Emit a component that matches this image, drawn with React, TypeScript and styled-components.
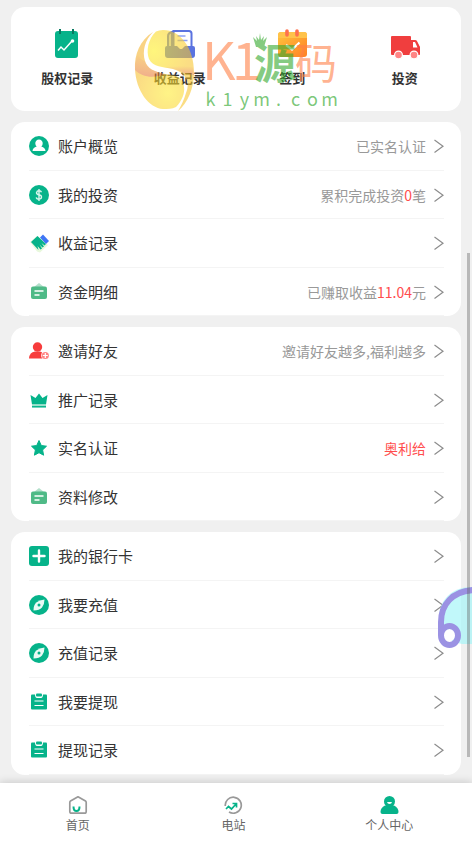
import React from 'react';
import styled, { createGlobalStyle } from 'styled-components';

const GREEN = '#06b38a';

const GlobalStyle = createGlobalStyle`
  * { box-sizing: border-box; }
  body {
    margin: 0;
    background: #f0f0f0;
    font-family: 'Noto Sans CJK SC', 'Noto Sans', sans-serif;
    color: #333;
  }
  a { color: inherit; text-decoration: none; }
`;

const Page = styled.div`
  position: relative;
  display: flex;
  flex-direction: column;
  min-height: 100vh;
`;

const Content = styled.main`
  display: flex;
  flex-direction: column;
  gap: 11px;
  padding: 7px 11px 8px;
`;

const Shortcuts = styled.nav`
  display: grid;
  grid-template-columns: repeat(4, 1fr);
  padding: 21px 0 24px;
  border-radius: 14px;
  background: #fff;
`;

const Shortcut = styled.a`
  display: flex;
  flex-direction: column;
  align-items: center;
  gap: 9px;
  font-size: 13px;
  font-weight: 700;
  line-height: 18px;
`;

const ShortcutIcon = styled.svg`
  width: 32px;
  height: 32px;
`;

const Group = styled.nav`
  padding: 0 17px 0 18px;
  border-radius: 14px;
  background: #fff;
`;

const Row = styled.a`
  display: flex;
  align-items: center;
  height: 49px;
  border-bottom: 1px solid #f4f4f4;

  &:nth-child(even) {
    height: 48px;
  }
`;

const RowIcon = styled.svg`
  flex: none;
  width: 20px;
  height: 20px;
  margin-right: 9px;
`;

const RowLabel = styled.span`
  flex: 1;
  font-size: 15px;
  line-height: 20px;
`;

const RowValue = styled.span<{ $alert?: boolean }>`
  margin-right: 8px;
  font-size: 14px;
  line-height: 20px;
  color: ${(p) => (p.$alert ? '#ff4d4d' : '#999')};
`;

const Amount = styled.span`
  color: #ff4d4d;
`;

const Chevron = styled.svg`
  flex: none;
  width: 10px;
  height: 16px;
`;

const TabBar = styled.nav`
  position: sticky;
  bottom: 0;
  display: grid;
  grid-template-columns: repeat(3, 1fr);
  margin-top: auto;
  padding: 12px 5px 11px 0;
  background: #fff;
  box-shadow: 0 -1px 8px rgba(0, 0, 0, 0.16);
`;

const Tab = styled.a`
  display: flex;
  flex-direction: column;
  align-items: center;
  gap: 2px;
  font-size: 12px;
  line-height: 16px;
  color: #666;
`;

const TabIcon = styled.svg`
  width: 20px;
  height: 20px;
`;

const Watermark = styled.div`
  position: absolute;
  top: 29px;
  left: 50%;
  transform: translateX(-50%);
  display: flex;
  gap: 8px;
  pointer-events: none;
`;

const Egg = styled.svg`
  width: 60px;
  height: 83px;
`;

const Brand = styled.div`
  display: flex;
  flex-direction: column;
  gap: 2px;
`;

const BrandName = styled.div`
  position: relative;
  display: grid;
  grid-template-columns: 30px 22px 41px 41px;
  height: 56px;
  padding-top: 8px;
  align-items: start;
`;

const BrandLetter = styled.span<{ $green?: boolean; $large?: boolean }>`
  font-size: ${(p) => (p.$large ? '52px' : '42px')};
  line-height: ${(p) => (p.$large ? '42px' : '48px')};
  font-weight: ${(p) => (p.$green ? 700 : 400)};
  color: ${(p) => (p.$green ? 'rgba(50, 168, 45, 0.6)' : 'rgba(255, 128, 70, 0.6)')};
`;

const BrandCrown = styled.svg`
  position: absolute;
  top: 3px;
  left: 50px;
  width: 16px;
  height: 16px;
`;

const BrandSite = styled.div`
  display: grid;
  grid-template-columns: repeat(8, 17px);
  justify-items: center;
  font-size: 18px;
  line-height: 22px;
  color: rgba(50, 168, 45, 0.65);
`;

const SupportButton = styled.button`
  position: fixed;
  right: 0;
  top: 586px;
  width: 34px;
  height: 64px;
  padding: 0;
  border: 0;
  background: none;
  overflow: hidden;
`;

const ScrollThumb = styled.div`
  position: absolute;
  top: 253px;
  right: 2px;
  width: 3px;
  height: 504px;
  background: rgba(100, 100, 100, 0.4);
`;

const shortcuts = [
  {
    label: '股权记录',
    icon: (
      <>
        <rect x="4" y="3" width="23" height="27" rx="3" fill={GREEN} />
        <path d="M9 1v5M22 1v5" stroke="#087a61" strokeWidth="2" />
        <path d="M7 22.500l3-3.500 3 3 8-9" fill="none" stroke="#fff" strokeWidth="1.500" />
        <circle cx="21.500" cy="13" r="1.800" fill="#fff" />
      </>
    ),
  },
  {
    label: '收益记录',
    icon: (
      <>
        <path d="M4 19V8q0-3 4-4v15" fill="#c6cff7" stroke="#5a73e0" strokeWidth="2" />
        <path d="M9.500 20V3H25q2.500 0 2.500 2.500V20" fill="#fff" stroke="#5a73e0" strokeWidth="2" />
        <path d="M13.500 8h8M13.500 12.500h10" stroke="#8fa4f5" strokeWidth="1.500" />
        <path d="M3 18h10l3 3h2l3-3h8q2 0 2 2v7q0 3-3 3H4q-3 0-3-3v-7q0-2 2-2z" fill="#5a73e0" />
      </>
    ),
  },
  {
    label: '签到',
    icon: (
      <>
        <defs>
          <linearGradient id="checkin" x1="0" y1="0" x2="1" y2="1">
            <stop offset="0" stopColor="#ffc53d" />
            <stop offset="1" stopColor="#ff8125" />
          </linearGradient>
        </defs>
        <rect x="2" y="4" width="29" height="25" rx="3" fill="url(#checkin)" />
        <path d="M2 10V7q0-3 3-3h23q3 0 3 3v3z" fill="#ffc34a" />
        <path d="M11 3v4M21 3v4" stroke="#ff704d" strokeWidth="3.600" strokeLinecap="round" />
        <path d="M10 17l6 4.500 7.500-7" fill="none" stroke="#fff" strokeWidth="2.200" />
      </>
    ),
  },
  {
    label: '投资',
    icon: (
      <>
        <path d="M3 8h18q1 0 1 1v3h4l4.500 7v7q0 1-1 1H3q-1 0-1-1V9q0-1 1-1z" fill="#f03e3e" />
        <path d="M22 12h4q2 0 2.500 2l2.500 5v7q0 1-1 1h-8z" fill="#f03e3e" />
        <path d="M24 14h2l2.500 5.500H24z" fill="#fff" />
        <circle cx="9.500" cy="27" r="3.900" fill="#ff8585" stroke="#fff" strokeWidth="1.200" />
        <circle cx="25" cy="27" r="3.900" fill="#ff8585" stroke="#fff" strokeWidth="1.200" />
      </>
    ),
  },
];

const briefcase = (
  <>
    <path d="M5 5l5-4 5 4z" fill="#b2dfca" />
    <rect x="2" y="4.500" width="16" height="12.500" rx="2" fill="#4fba87" />
    <path d="M5.500 9h9M5.500 13h5" stroke="#fff" strokeWidth="1.500" />
  </>
);

const compass = (
  <>
    <circle cx="10" cy="10" r="10" fill={GREEN} />
    <path d="M15.500 4.500q0 5-2.500 8T4.500 15.500q0-5.500 2.800-8t8.200-3z" fill="#e9faf5" />
    <circle cx="10" cy="10" r="1.500" fill={GREEN} />
  </>
);

const clipboard = (
  <>
    <path d="M3 2.500h14q1 0 1 1v13q0 1-1 1H3q-1 0-1-1v-13q0-1 1-1z" fill={GREEN} />
    <path d="M6 2q0 4 2 4h4q2 0 2-4z" fill="#fff" />
    <path d="M7 2.500q0-1 1-1h4q1 0 1 1v1q0 1-1 1H8q-1 0-1-1z" fill={GREEN} />
    <path d="M5.500 9h9M5.500 13.500h9" stroke="#fff" strokeWidth="1.200" />
  </>
);

interface RowData {
  label: string;
  icon: React.ReactNode;
  value?: React.ReactNode;
  alert?: boolean;
}

const groups: RowData[][] = [
  [
    {
      label: '账户概览',
      value: '已实名认证',
      icon: (
        <>
          <circle cx="10" cy="10" r="10" fill={GREEN} />
          <path d="M10 3.500a3.700 3.700 0 0 1 3.700 4q0 2-1.400 3 4 1.200 4.200 4.500H3.500q.200-3.300 4.200-4.500-1.400-1-1.400-3A3.700 3.700 0 0 1 10 3.500z" fill="#fff" />
        </>
      ),
    },
    {
      label: '我的投资',
      value: (
        <>
          累积完成投资<Amount>0</Amount>笔
        </>
      ),
      icon: (
        <>
          <circle cx="10" cy="10" r="10" fill={GREEN} />
          <path d="M12.500 7.300Q12 5.800 10 5.800T7.500 7.700q0 1.600 2.500 2.100t2.500 2.300q0 2-2.500 2t-2.700-1.800M10 4v12" fill="none" stroke="#d8f5ec" strokeWidth="1.400" />
        </>
      ),
    },
    {
      label: '收益记录',
      icon: (
        <>
          <path d="M1 9l7-6 11 9-8 7.500-3-1z" fill="#e8f8dc" />
          <path d="M2 9l6.500-6L17 11l-1.500 1.500-3-2.500 2.500 3.500-1.500 1-3-3 2.500 4-1.500 1-3-3.500L9.500 17z" fill={GREEN} />
          <path d="M11 4.500L14 1.500 20 8l-3 3z" fill="#3f75f5" />
        </>
      ),
    },
    {
      label: '资金明细',
      value: (
        <>
          已赚取收益<Amount>11.04</Amount>元
        </>
      ),
      icon: briefcase,
    },
  ],
  [
    {
      label: '邀请好友',
      value: '邀请好友越多,福利越多',
      icon: (
        <>
          <circle cx="8.500" cy="6" r="4.700" fill="#f73c3c" />
          <path d="M0 17.500q.500-6.500 6-7h5q3 .500 3 4v3z" fill="#f73c3c" />
          <circle cx="16.300" cy="14.500" r="4.200" fill="#fff" />
          <circle cx="16.300" cy="14.500" r="3.600" fill="#ff8585" />
          <path d="M13.800 14.500h5M16.300 12v5" stroke="#fff" strokeWidth="1.200" />
        </>
      ),
    },
    {
      label: '推广记录',
      icon: (
        <>
          <path d="M1.500 5l5 3L10 3.500 13.500 8l5-3L17 14.500H3z" fill={GREEN} />
          <path d="M3 14.500h14V17H3z" fill="#9de0cc" />
          <path d="M3 16.800h14" stroke={GREEN} strokeWidth="1.500" />
        </>
      ),
    },
    {
      label: '实名认证',
      value: '奥利给',
      alert: true,
      icon: (
        <path
          d="M10 2.500l2.300 5 5.200.700-3.900 3.700 1 5.300L10 14.700l-4.600 2.500 1-5.300-3.900-3.700 5.200-.700z"
          fill={GREEN}
          stroke={GREEN}
          strokeLinejoin="round"
        />
      ),
    },
    { label: '资料修改', icon: briefcase },
  ],
  [
    {
      label: '我的银行卡',
      icon: (
        <>
          <rect width="20" height="20" rx="3" fill={GREEN} />
          <path d="M4.500 10h11M10 4.500v11" stroke="#fff" strokeWidth="2.400" strokeLinecap="round" />
        </>
      ),
    },
    { label: '我要充值', icon: compass },
    { label: '充值记录', icon: compass },
    { label: '我要提现', icon: clipboard },
    { label: '提现记录', icon: clipboard },
  ],
];

const tabs = [
  {
    label: '首页',
    icon: (
      <>
        <path d="M10 1.800L17.500 6q.700.500.700 1.500v9q0 1.700-1.700 1.700h-13q-1.700 0-1.700-1.700v-9Q1.800 6.500 2.500 6z" fill="none" stroke="#999" strokeWidth="1.700" strokeLinejoin="round" />
        <path d="M5.500 11.500q0 4.500 3 4.500t3-4.500" fill="none" stroke={GREEN} strokeWidth="2" />
      </>
    ),
  },
  {
    label: '电站',
    icon: (
      <>
        <path d="M2.300 11A8 8 0 1 1 6 17" fill="none" stroke="#999" strokeWidth="1.700" />
        <path d="M3 14l2.500-2.500 3 2.500L13 9M9.500 8.500h4v4" fill="none" stroke={GREEN} strokeWidth="1.700" />
      </>
    ),
  },
  {
    label: '个人中心',
    icon: (
      <>
        <circle cx="10.500" cy="6.500" r="5.500" fill={GREEN} />
        <path d="M6 10.500h9q4.500 2 4.500 6.500 0 2-2 2h-14q-2 0-2-2 0-4.500 4.500-6.500z" fill={GREEN} />
        <path d="M8 7h5q-.500 2-2.500 2T8 7z" fill="#fff" />
      </>
    ),
  },
];

export default function App() {
  return (
    <Page>
      <GlobalStyle />
      <Content>
        <Shortcuts>
          {shortcuts.map((s) => (
            <Shortcut href="#" key={s.label}>
              <ShortcutIcon viewBox="0 0 32 32" aria-hidden="true">{s.icon}</ShortcutIcon>
              {s.label}
            </Shortcut>
          ))}
        </Shortcuts>
        {groups.map((rows) => (
          <Group key={rows[0].label}>
            {rows.map((row) => (
              <Row href="#" key={row.label}>
                <RowIcon viewBox="0 0 20 20" aria-hidden="true">{row.icon}</RowIcon>
                <RowLabel>{row.label}</RowLabel>
                {row.value && <RowValue $alert={row.alert}>{row.value}</RowValue>}
                <Chevron viewBox="0 0 10 16" aria-hidden="true">
                  <path d="M0.500 2L9 8.200 0.500 14.500" fill="none" stroke="#8c8c8c" strokeWidth="1.200" />
                </Chevron>
              </Row>
            ))}
          </Group>
        ))}
      </Content>

      <TabBar>
        {tabs.map((t) => (
          <Tab href="#" key={t.label}>
            <TabIcon viewBox="0 0 20 20" aria-hidden="true">{t.icon}</TabIcon>
            {t.label}
          </Tab>
        ))}
      </TabBar>

      <Watermark>
        <Egg viewBox="0 0 60 83" aria-hidden="true">
          <defs>
            <radialGradient id="yolk" gradientUnits="userSpaceOnUse" cx="20" cy="22" r="36">
              <stop offset="0" stopColor="#fff020" />
              <stop offset="1" stopColor="#f9c62c" />
            </radialGradient>
            <radialGradient id="base" gradientUnits="userSpaceOnUse" cx="34" cy="64" r="44">
              <stop offset="0" stopColor="#ffec30" />
              <stop offset="1" stopColor="#f6b52c" />
            </radialGradient>
            <linearGradient id="shadeLeft" x1="0" y1="1" x2="0" y2="0">
              <stop offset="0" stopColor="#e2603c" />
              <stop offset="1" stopColor="#e2603c" stopOpacity="0" />
            </linearGradient>
          </defs>
          <g opacity="0.580">
            <path d="M19 3C6 11 0 26 1 40c1 22 14 39 28 40 5 0 9 0 13-2 6-6 9-14 8-20-1-12-10-11-19-13-11-2-18-6-20-13C8 22 11 11 19 3z" fill="url(#base)" />
            <path d="M22 2.500C14 10 12 22 15 30c4 8 14 8 24 10 12 3 18 13 13 24-2 7-5 13-8 18 10-8 16-23 16-39C60 20 47 1 29 1q-4 0-7 1.500z" fill="url(#yolk)" />
            <path d="M4 24C2 29 1 34 1 41c7 7 18 9 30 4-11-2-18-6-20-13-4-1-6-4-7-8z" fill="url(#shadeLeft)" opacity="0.800" />
            <path d="M32 38.500c10-2 21-2 27 0l1 8c-4-2-6-3-9-2-4-3-10-4-19-6z" fill="url(#shadeLeft)" opacity="0.800" />
          </g>
        </Egg>
        <Brand>
          <BrandName>
            <BrandLetter $large>K</BrandLetter>
            <BrandLetter $large>1</BrandLetter>
            <BrandLetter $green>源</BrandLetter>
            <BrandLetter>码</BrandLetter>
            <BrandCrown viewBox="0 0 16 16" aria-hidden="true">
              <path d="M1 5l4 4L4 4l3 4 1-7 1 7 3-4-1 5 4-4-3 10H4z" fill="#84cb80" />
            </BrandCrown>
          </BrandName>
          <BrandSite>
            {'k1ym.com'.split('').map((c, i) => (
              <span key={i}>{c}</span>
            ))}
          </BrandSite>
        </Brand>
      </Watermark>

      <SupportButton aria-label="客服">
        <svg width="34" height="64" viewBox="0 0 34 64" aria-hidden="true">
          <path d="M34 1C14 1 1 14 1 32c0 16 12 26 26 26h7z" fill="#a0f5f8" opacity="0.650" />
          <circle cx="11.500" cy="49" r="6" fill="#fff" />
          <g fill="none" stroke="#9b92e3" strokeWidth="6">
            <path d="M36 4C14 5 3 19 3 36v13" />
            <ellipse cx="11.500" cy="49.500" rx="8.500" ry="9.500" />
          </g>
        </svg>
      </SupportButton>
      <ScrollThumb />
    </Page>
  );
}
